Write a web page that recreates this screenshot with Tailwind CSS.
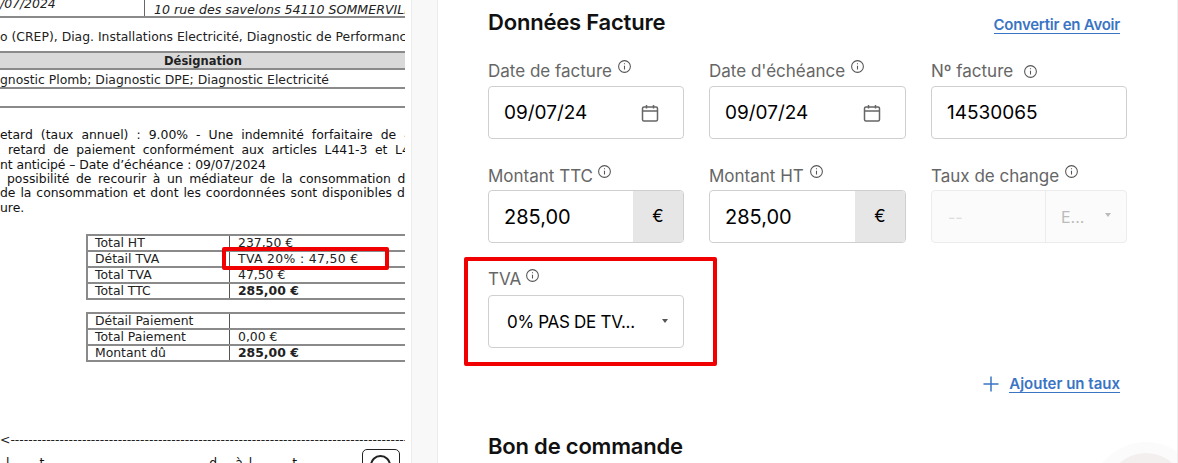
<!DOCTYPE html>
<html lang="fr">
<head>
    <meta charset="UTF-8">
    <title>Données Facture</title>
    <script src="https://cdn.jsdelivr.net/npm/@tailwindcss/browser@4"></script>
</head>
<body class="bg-white h-[463px] overflow-hidden font-['Inter',sans-serif]">
    <div class="flex h-[463px] w-[1178px] overflow-hidden">

        <!-- PDF preview -->
        <div class="relative w-[405px] h-[463px] overflow-hidden shrink-0 font-['DejaVu_Sans',sans-serif] text-[12.4px] text-[#222]">
            <div class="flex h-[18px] border-b-2 border-[#8a8a8a]">
                <div class="w-[145px] shrink-0 border-r border-[#666] overflow-hidden whitespace-nowrap italic leading-[8px]">/07/2024</div>
                <div class="pl-[9px] italic whitespace-nowrap leading-[19px] text-[12.6px]">10 rue des savelons 54110 SOMMERVILLE</div>
            </div>
            <div class="whitespace-nowrap mt-[11px] leading-[16px]">o (CREP), Diag. Installations Electricité, Diagnostic de Performance</div>
            <div class="mt-[6px] h-[19px] bg-[#d9d9d9] border-y-2 border-[#8a8a8a] text-center font-bold text-[11.5px] leading-[17px] pl-[1px]">Désignation</div>
            <div class="h-[19px] border-b-2 border-[#8a8a8a] whitespace-nowrap leading-[20px]">gnostic Plomb; Diagnostic DPE; Diagnostic Electricité</div>
            <div class="h-[19px] border-b-2 border-[#8a8a8a]"></div>

            <div class="mt-[19px] whitespace-nowrap leading-[15px] text-[#111]">
                <div class="w-[420px] flex justify-between">
                    <span>etard</span><span>(taux</span><span>annuel)</span><span>:</span><span>9.00%</span><span>-</span><span>Une</span><span>indemnité</span><span>forfaitaire</span><span>de</span><span>40</span>
                </div>
                <div class="w-[438px] flex justify-between">
                    <span class="pl-[8px]">retard</span><span>de</span><span>paiement</span><span>conformément</span><span>aux</span><span>articles</span><span>L441-3</span><span>et</span><span>L441-6</span>
                </div>
                <div class="tracking-[-0.07px]">nt anticipé – Date d’échéance : 09/07/2024</div>
                <div class="w-[466px] flex justify-between leading-[14px]">
                    <span class="pl-[7px]">possibilité</span><span>de</span><span>recourir</span><span>à</span><span>un</span><span>médiateur</span><span>de</span><span>la</span><span>consommation</span><span>du</span><span>secteur</span>
                </div>
                <div class="w-[440px] flex justify-between leading-[14px]">
                    <span>de</span><span>la</span><span>consommation</span><span>et</span><span>dont</span><span>les</span><span>coordonnées</span><span>sont</span><span>disponibles</span><span>du</span><span>site</span>
                </div>
                <div class="leading-[15px]">ure.</div>
            </div>

            <div class="ml-[86px] mt-[19px] border-t-2 border-l-2 border-[#8a8a8a]">
                <div class="flex h-[16px] border-b-2 border-[#8a8a8a] leading-[14px]"><div class="w-[142px] pl-[7px] border-r border-[#555]">Total HT</div><div class="pl-[8px]">237,50 €</div></div>
                <div class="flex h-[16px] border-b-2 border-[#8a8a8a] leading-[14px]"><div class="w-[142px] pl-[7px] border-r border-[#555]">Détail TVA</div><div class="pl-[8px] tracking-[0.35px]">TVA 20% : 47,50 €</div></div>
                <div class="flex h-[16px] border-b-2 border-[#8a8a8a] leading-[14px]"><div class="w-[142px] pl-[7px] border-r border-[#555]">Total TVA</div><div class="pl-[8px]">47,50 €</div></div>
                <div class="flex h-[16px] border-b-2 border-[#8a8a8a] leading-[14px]"><div class="w-[142px] pl-[7px] border-r border-[#555]">Total TTC</div><div class="pl-[8px] font-bold">285,00 €</div></div>
            </div>
            <div class="ml-[86px] mt-[12px] border-t-2 border-l-2 border-[#8a8a8a]">
                <div class="flex h-[16px] border-b-2 border-[#8a8a8a] leading-[14px]"><div class="w-[142px] pl-[7px] border-r border-[#555]">Détail Paiement</div><div class="pl-[8px]"></div></div>
                <div class="flex h-[16px] border-b-2 border-[#8a8a8a] leading-[14px]"><div class="w-[142px] pl-[7px] border-r border-[#555]">Total Paiement</div><div class="pl-[8px]">0,00 €</div></div>
                <div class="flex h-[16px] border-b-2 border-[#8a8a8a] leading-[14px]"><div class="w-[142px] pl-[7px] border-r border-[#555]">Montant dû</div><div class="pl-[8px] font-bold">285,00 €</div></div>
            </div>

            <!-- cut line -->
            <div class="mt-[71px] h-[14px] leading-[14px] whitespace-nowrap overflow-hidden">&lt;------------------------------------------------------------------------------------------------------------</div>
            <!-- next line of the document, only the tops show -->
            <div class="flex whitespace-nowrap leading-[24px] mt-[4px] text-[#111]">
                <span class="ml-[6px]">l</span><span class="ml-[30px]">t</span><span class="ml-[165px]">d</span><span class="ml-[18px]">à</span><span class="ml-[6px]">l</span><span class="ml-[40px]">t</span>
            </div>

            <!-- stamp, over the document -->
            <div class="absolute left-[362px] top-[449px] w-[38px] h-[30px] border border-[#222] rounded-[5px] bg-white"></div>
            <div class="absolute left-[370px] top-[455px] w-[21px] h-[21px] border-2 border-[#222] rounded-full"></div>

            <!-- highlight round the VAT detail -->
            <div class="absolute left-[222px] top-[247px] w-[167px] h-[23px] border-[4px] border-[#f00000] rounded-[2px]"></div>
        </div>

        <!-- gutter -->
        <div class="w-[6px] shrink-0 bg-white"></div>
        <div class="w-[27px] shrink-0 bg-[#f8f8f8] border-x border-[#ececec]"></div>

        <!-- invoice form -->
        <div class="relative flex-1 bg-white pl-[50px] pr-[50px] border-r border-[#eeeeee] overflow-hidden">
            <div class="absolute right-[-24px] top-[442px] w-[110px] h-[110px] rounded-full bg-[#fcfbfb]"></div>
            <div class="absolute right-[-9px] top-[453px] w-[80px] h-[80px] rounded-full bg-[#f3efef]"></div>

            <div class="relative flex items-start justify-between h-[55px] pt-[8px]">
                <h2 class="text-[22px] leading-[28px] font-semibold text-[#111] tracking-[-0.2px]">Données Facture</h2>
                <a class="mt-[8px] mr-[7px] text-[15px] leading-[17px] font-semibold text-[#3a74c4] border-b border-[#3a74c4] tracking-[-0.25px]">Convertir en Avoir</a>
            </div>

            <div class="relative grid grid-cols-[196px_197px_196px] gap-x-[25px] gap-y-[21px] w-[639px]">
                <!-- row 1 -->
                <div>
                    <div class="flex items-start h-[31px] text-[17px] leading-[33px] text-[#666]">Date de facture
                        <svg class="ml-[5px] mt-[4px]" width="15" height="15" viewBox="0 0 14 14" fill="none" stroke="#555" stroke-width="1"><circle cx="7" cy="7" r="5.5"/><path d="M7 6.2v3.6M7 4v.9"/></svg>
                    </div>
                    <div class="flex items-center justify-between h-[53px] border border-[#cfcfcf] rounded-[4px] pl-[15px] pr-[24px] text-[19px] text-black">
                        <span class="pt-[2px]">09/07/24</span>
                        <svg width="18" height="18" viewBox="0 0 18 18" fill="none" stroke="#666" stroke-width="1.5"><rect x="1.5" y="3" width="15" height="14" rx="1.5"/><path d="M1.5 7h15M5.5 1v3.5M12.5 1v3.5"/></svg>
                    </div>
                </div>
                <div>
                    <div class="flex items-start h-[31px] text-[17px] leading-[33px] text-[#666]">Date d'échéance
                        <svg class="ml-[5px] mt-[4px]" width="15" height="15" viewBox="0 0 14 14" fill="none" stroke="#555" stroke-width="1"><circle cx="7" cy="7" r="5.5"/><path d="M7 6.2v3.6M7 4v.9"/></svg>
                    </div>
                    <div class="flex items-center justify-between h-[53px] border border-[#cfcfcf] rounded-[4px] pl-[15px] pr-[24px] text-[19px] text-black">
                        <span class="pt-[2px]">09/07/24</span>
                        <svg width="18" height="18" viewBox="0 0 18 18" fill="none" stroke="#666" stroke-width="1.5"><rect x="1.5" y="3" width="15" height="14" rx="1.5"/><path d="M1.5 7h15M5.5 1v3.5M12.5 1v3.5"/></svg>
                    </div>
                </div>
                <div>
                    <div class="flex items-start h-[31px] text-[17px] leading-[33px] text-[#666]">Nº facture
                        <svg class="ml-[10px] mt-[9px]" width="15" height="15" viewBox="0 0 14 14" fill="none" stroke="#555" stroke-width="1"><circle cx="7" cy="7" r="5.5"/><path d="M7 6.2v3.6M7 4v.9"/></svg>
                    </div>
                    <div class="flex items-center h-[53px] border border-[#cfcfcf] rounded-[4px] pl-[15px] pt-[2px] text-[19px] text-black">14530065</div>
                </div>

                <!-- row 2 -->
                <div>
                    <div class="flex items-start h-[30px] text-[17px] leading-[33px] text-[#666]">Montant TTC
                        <svg class="ml-[4px] mt-[4px]" width="15" height="15" viewBox="0 0 14 14" fill="none" stroke="#555" stroke-width="1"><circle cx="7" cy="7" r="5.5"/><path d="M7 6.2v3.6M7 4v.9"/></svg>
                    </div>
                    <div class="flex h-[53px] border border-[#cfcfcf] rounded-[4px] overflow-hidden text-[20px] text-black">
                        <div class="flex-1 flex items-center pl-[15px]">285,00</div>
                        <div class="w-[50px] flex items-center justify-center bg-[#e6e6e6] text-[17px]">€</div>
                    </div>
                </div>
                <div>
                    <div class="flex items-start h-[30px] text-[17px] leading-[33px] text-[#666]">Montant HT
                        <svg class="ml-[5px] mt-[4px]" width="15" height="15" viewBox="0 0 14 14" fill="none" stroke="#555" stroke-width="1"><circle cx="7" cy="7" r="5.5"/><path d="M7 6.2v3.6M7 4v.9"/></svg>
                    </div>
                    <div class="flex h-[53px] border border-[#cfcfcf] rounded-[4px] overflow-hidden text-[20px] text-black">
                        <div class="flex-1 flex items-center pl-[15px]">285,00</div>
                        <div class="w-[50px] flex items-center justify-center bg-[#e6e6e6] text-[17px]">€</div>
                    </div>
                </div>
                <div>
                    <div class="flex items-start h-[30px] text-[17px] leading-[33px] text-[#666]">Taux de change
                        <svg class="ml-[5px] mt-[4px]" width="15" height="15" viewBox="0 0 14 14" fill="none" stroke="#555" stroke-width="1"><circle cx="7" cy="7" r="5.5"/><path d="M7 6.2v3.6M7 4v.9"/></svg>
                    </div>
                    <div class="flex h-[53px] border border-[#ececec] rounded-[4px] overflow-hidden text-[16px] text-[#bbb] bg-[#fbfbfb]">
                        <div class="w-[114px] flex items-center pl-[16px] border-r border-[#ececec] text-[#ddd]">--</div>
                        <div class="flex-1 flex items-center justify-between pl-[15px] pr-[15px]">E...
                            <div class="w-0 h-0 mb-[4px] border-x-[3.5px] border-x-transparent border-t-[4px] border-t-[#bbb]"></div>
                        </div>
                    </div>
                </div>

                <!-- row 3 -->
                <div class="relative">
                    <div class="flex items-start h-[31px] text-[17px] leading-[31px] text-[#666]">TVA
                        <svg class="ml-[4px] mt-[4px]" width="15" height="15" viewBox="0 0 14 14" fill="none" stroke="#555" stroke-width="1"><circle cx="7" cy="7" r="5.5"/><path d="M7 6.2v3.6M7 4v.9"/></svg>
                    </div>
                    <div class="flex items-center justify-between h-[53px] border border-[#cfcfcf] rounded-[4px] pl-[18px] pr-[15px] text-[17px] tracking-[-0.3px] text-black">
                        <span class="pt-[3px]">0% PAS DE TV...</span>
                        <div class="w-0 h-0 mb-[1px] border-x-[3.5px] border-x-transparent border-t-[4px] border-t-[#555]"></div>
                    </div>
                    <!-- highlight round the VAT field -->
                    <div class="absolute left-[-24px] top-[-7px] w-[253px] h-[109px] border-[4px] border-[#f00000] rounded-[2px]"></div>
                </div>
            </div>

            <div class="relative flex items-center justify-end mt-[27px] mr-[7px] gap-[9px]">
                <svg width="18" height="18" viewBox="0 0 18 18" fill="none" stroke="#3a74c4" stroke-width="1.5"><path d="M9 1.5v15M1.5 9h15"/></svg>
                <a class="text-[15px] leading-[17px] font-semibold text-[#3a74c4] border-b border-[#3a74c4]">Ajouter un taux</a>
            </div>

            <h2 class="relative mt-[39px] text-[22px] leading-[28px] font-semibold text-[#111] tracking-[-0.2px]">Bon de commande</h2>
        </div>
    </div>
</body>
</html>
